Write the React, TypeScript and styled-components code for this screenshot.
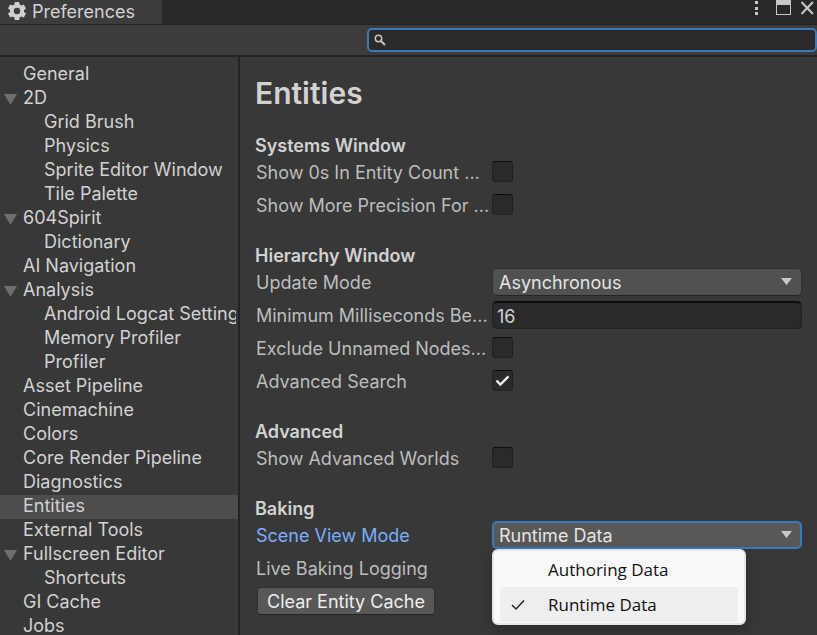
import React, { useState } from "react";
import styled, { createGlobalStyle } from "styled-components";

const GlobalStyle = createGlobalStyle`
  *, *::before, *::after { box-sizing: border-box; }
  body {
    margin: 0;
    background: #383838;
    color: #c4c4c4;
    font-family: Inter, "Liberation Sans", sans-serif;
    font-size: 18px;
  }
  button, input, select { font: inherit; color: inherit; }
`;

const Window = styled.div`
  display: flex;
  flex-direction: column;
  height: 100vh;
  overflow: hidden;
`;

const TitleBar = styled.header`
  display: flex;
  justify-content: space-between;
  height: 25px;
  background: #282828;
  border-bottom: 1px solid #232323;
`;

const Tab = styled.div`
  display: flex;
  align-items: flex-start;
  gap: 6px;
  width: 162px;
  padding-left: 8px;
  background: #3c3c3c;
  color: #d2d2d2;
  line-height: 24px;
`;

const WindowButtons = styled.div`
  display: flex;
  align-items: flex-start;
`;

const IconButton = styled.button`
  display: flex;
  padding: 0;
  border: 0;
  background: none;
`;

const Toolbar = styled.div`
  display: flex;
  justify-content: flex-end;
  align-items: center;
  height: 32px;
  background: #3c3c3c;
  border-bottom: 2px solid #232323;
`;

const SearchBox = styled.label`
  display: flex;
  align-items: center;
  gap: 6px;
  width: 450px;
  max-width: 100%;
  height: 24px;
  padding: 0 6px 0 5px;
  background: #2a2a2a;
  border: 2px solid #3a79bb;
  border-radius: 5px;
`;

const SearchInput = styled.input`
  flex: 1;
  min-width: 0;
  height: 18px;
  padding: 0;
  border: 0;
  outline: 0;
  background: none;
  font-size: 16px;
`;

const Body = styled.div`
  display: flex;
  flex: 1;
  min-height: 0;
`;

const Sidebar = styled.nav`
  flex: 0 0 240px;
  padding-top: 6px;
  overflow: hidden;
  border-right: 2px solid #232323;
`;

const NavList = styled.ul`
  margin: 0;
  padding: 0;
  list-style: none;
`;

const NavItem = styled.li<{ $depth: number; $selected?: boolean }>`
  display: flex;
  align-items: flex-start;
  height: 24px;
  padding-left: ${(p) => (p.$depth ? 44 : 4)}px;
  padding-right: 2px;
  background: ${(p) => (p.$selected ? "#4d4d4d" : "transparent")};
`;

const Foldout = styled.span`
  display: flex;
  flex: 0 0 19px;
  align-items: center;
  height: 24px;
`;

const NavLink = styled.a`
  flex: 1;
  min-width: 0;
  overflow: hidden;
  color: #d2d2d2;
  line-height: 22px;
  text-decoration: none;
  white-space: nowrap;
`;

const Content = styled.main`
  display: flex;
  flex: 1;
  flex-direction: column;
  gap: 24px;
  min-width: 0;
  padding: 16px 15px 0;
`;

const Title = styled.h1`
  margin: 0 0 -4px;
  color: #d2d2d2;
  font-size: 30px;
  font-weight: 600;
  line-height: 40px;
`;

const Section = styled.section`
  display: flex;
  flex-direction: column;
`;

const SectionTitle = styled.h2`
  margin: 0;
  color: #d2d2d2;
  font-size: 18px;
  font-weight: 600;
  line-height: 25px;
`;

const Rows = styled.div`
  display: flex;
  flex-direction: column;
  gap: 5px;
`;

const Row = styled.div`
  display: grid;
  grid-template-columns: 237px minmax(0, 1fr);
  align-items: center;
  height: 28px;
`;

const Label = styled.label<{ $active?: boolean }>`
  padding-left: 1px;
  overflow: hidden;
  color: ${(p) => (p.$active ? "#7baefa" : "#bdbdbd")};
  white-space: nowrap;
`;

const CheckWrap = styled.span`
  position: relative;
  display: flex;
  width: 21px;
  height: 21px;
  margin-bottom: 1px;
`;

const CheckInput = styled.input`
  width: 21px;
  height: 21px;
  margin: 0;
  appearance: none;
  background: #2a2a2a;
  border: 1px solid #212121;
  border-top-color: #0d0d0d;
  border-radius: 3px;
  & + svg { display: none; }
  &:checked + svg { display: block; }
`;

const CheckMark = styled.svg`
  position: absolute;
  inset: 0;
  pointer-events: none;
`;

const NumberInput = styled.input`
  width: 100%;
  height: 28px;
  padding: 1px 4px 0;
  background: #2a2a2a;
  border: 1px solid #212121;
  border-top: 2px solid #0d0d0d;
  border-radius: 5px;
  color: #d2d2d2;
`;

const SelectWrap = styled.span`
  position: relative;
  display: block;
`;

const SelectInput = styled.select<{ $open?: boolean }>`
  display: block;
  width: 100%;
  height: 28px;
  padding: 0 30px 0 ${(p) => (p.$open ? 5 : 6)}px;
  appearance: none;
  outline: 0;
  background: ${(p) => (p.$open ? "#585858" : "#515151")};
  border: ${(p) => (p.$open ? "2px solid #3a79bb" : "1px solid #303030")};
  border-bottom-color: ${(p) => (p.$open ? "#3a79bb" : "#242424")};
  border-radius: 5px;
  color: #e4e4e4;
`;

const Arrow = styled.svg`
  position: absolute;
  top: 10px;
  right: 10px;
  pointer-events: none;
`;

const Menu = styled.div`
  position: absolute;
  top: 28px;
  left: 0;
  z-index: 1;
  width: 254px;
  padding: 1px 6px 1px;
  background: #f9f9f9;
  border: 2px solid #e6e6e6;
  border-radius: 6px;
  box-shadow: 0 5px 14px rgba(0, 0, 0, 0.25);
`;

const MenuItem = styled.button<{ $selected?: boolean }>`
  display: grid;
  grid-template-columns: 48px 1fr;
  align-items: center;
  width: 100%;
  height: 35px;
  padding: 0;
  border: 0;
  border-radius: 4px;
  background: ${(p) => (p.$selected ? "#efefef" : "transparent")};
  color: #111;
  font-family: "Open Sans", "Noto Sans", sans-serif;
  font-size: 17px;
  text-align: left;
`;

const MenuCheck = styled.svg`
  grid-column: 1;
  margin-left: 11px;
`;

const MenuText = styled.span`
  grid-column: 2;
`;

const ActionButton = styled.button`
  align-self: flex-start;
  height: 28px;
  margin-left: 2px;
  padding: 0 9px;
  background: #585858;
  border: 1px solid #303030;
  border-bottom-color: #242424;
  border-radius: 4px;
  color: #eeeeee;
`;

type NavEntry = { name: string; depth?: number; open?: boolean };

const navigation: NavEntry[] = [
  { name: "General" },
  { name: "2D", open: true },
  { name: "Grid Brush", depth: 1 },
  { name: "Physics", depth: 1 },
  { name: "Sprite Editor Window", depth: 1 },
  { name: "Tile Palette", depth: 1 },
  { name: "604Spirit", open: true },
  { name: "Dictionary", depth: 1 },
  { name: "AI Navigation" },
  { name: "Analysis", open: true },
  { name: "Android Logcat Settings", depth: 1 },
  { name: "Memory Profiler", depth: 1 },
  { name: "Profiler", depth: 1 },
  { name: "Asset Pipeline" },
  { name: "Cinemachine" },
  { name: "Colors" },
  { name: "Core Render Pipeline" },
  { name: "Diagnostics" },
  { name: "Entities" },
  { name: "External Tools" },
  { name: "Fullscreen Editor", open: true },
  { name: "Shortcuts", depth: 1 },
  { name: "GI Cache" },
  { name: "Jobs" },
];

function GearIcon() {
  return (
    <svg width="18" height="22" viewBox="0 0 18 22" aria-hidden="true">
      <g transform="translate(9 11)" fill="#d0d0d0">
        <path
          fillRule="evenodd"
          d="M-2.200 -9h4.400l.4 2.600 1.800 1 2.400-1 2.200 3.800-2 1.600v2l2 1.600-2.200 3.800-2.400-1-1.800 1-.4 2.600h-4.400l-.4-2.600-1.800-1-2.400 1-2.200-3.800 2-1.600v-2l-2-1.600 2.200-3.800 2.400 1 1.800-1zM0-3.200a3.200 3.200 0 1 0 0 6.400 3.200 3.200 0 0 0 0-6.400z"
        />
      </g>
    </svg>
  );
}

function CheckField({ id, label, checked }: { id: string; label: string; checked?: boolean }) {
  return (
    <Row>
      <Label htmlFor={id}>{label}</Label>
      <CheckWrap>
        <CheckInput id={id} type="checkbox" defaultChecked={checked} />
        <CheckMark width="21" height="21" viewBox="0 0 21 21" aria-hidden="true">
          <path d="M4.500 10.500l3.800 4L16.500 6.300" fill="none" stroke="#eeeeee" strokeWidth="2.400" />
        </CheckMark>
      </CheckWrap>
    </Row>
  );
}

function DropArrow() {
  return (
    <Arrow width="11" height="7" viewBox="0 0 11 7" aria-hidden="true">
      <path d="M0 0h11L5.500 7z" fill="#c8c8c8" />
    </Arrow>
  );
}

export default function App() {
  const [sceneMode, setSceneMode] = useState("Runtime Data");
  const modes = ["Authoring Data", "Runtime Data"];

  return (
    <>
      <GlobalStyle />
      <Window>
        <TitleBar>
          <Tab>
            <GearIcon />
            Preferences
          </Tab>
          <WindowButtons>
            <IconButton aria-label="Menu">
              <svg width="22" height="18" viewBox="0 0 22 18" fill="#c8c8c8">
                <path d="M1 1h3v3H1zM1 7h3v3H1zM1 12h3v3H1z" />
              </svg>
            </IconButton>
            <IconButton aria-label="Maximize">
              <svg width="24" height="18" viewBox="0 0 24 18">
                <path d="M0 0h15v15H0zM1 5v9h13V5z" fill="#c8c8c8" fillRule="evenodd" />
              </svg>
            </IconButton>
            <IconButton aria-label="Close">
              <svg width="17" height="18" viewBox="0 0 17 18">
                <path d="M1.500 2l11.500 12M13 2L1.500 14" stroke="#c8c8c8" strokeWidth="2" />
              </svg>
            </IconButton>
          </WindowButtons>
        </TitleBar>
        <Toolbar>
          <SearchBox>
            <svg width="12" height="12" viewBox="0 0 12 12" fill="none" stroke="#c4c4c4" aria-hidden="true">
              <circle cx="4.500" cy="4.500" r="3.200" strokeWidth="1.500" />
              <path d="M7 7l4 4" strokeWidth="2" />
            </svg>
            <SearchInput type="text" aria-label="Search preferences" />
          </SearchBox>
        </Toolbar>
        <Body>
          <Sidebar>
            <NavList>
              {navigation.map((item) => (
                <NavItem key={item.name} $depth={item.depth ?? 0} $selected={item.name === "Entities"}>
                  {!item.depth && (
                    <Foldout>
                      {item.open && (
                        <svg width="13" height="12" viewBox="0 0 13 12" aria-hidden="true">
                          <path d="M0 1h13L6.500 12z" fill="#6e6e6e" />
                        </svg>
                      )}
                    </Foldout>
                  )}
                  <NavLink href="#">{item.name}</NavLink>
                </NavItem>
              ))}
            </NavList>
          </Sidebar>
          <Content>
            <Title>Entities</Title>
            <Section>
              <SectionTitle>Systems Window</SectionTitle>
              <Rows>
                <CheckField id="show-zeros" label="Show 0s In Entity Count ..." />
                <CheckField id="precision" label="Show More Precision For ..." />
              </Rows>
            </Section>
            <Section>
              <SectionTitle>Hierarchy Window</SectionTitle>
              <Rows>
                <Row>
                  <Label htmlFor="update-mode">Update Mode</Label>
                  <SelectWrap>
                    <SelectInput id="update-mode" defaultValue="Asynchronous">
                      <option>Asynchronous</option>
                      <option>Synchronous</option>
                    </SelectInput>
                    <DropArrow />
                  </SelectWrap>
                </Row>
                <Row>
                  <Label htmlFor="minimum-ms">Minimum Milliseconds Be...</Label>
                  <NumberInput id="minimum-ms" type="text" inputMode="numeric" defaultValue="16" />
                </Row>
                <CheckField id="unnamed" label="Exclude Unnamed Nodes..." />
                <CheckField id="advanced-search" label="Advanced Search" checked />
              </Rows>
            </Section>
            <Section>
              <SectionTitle>Advanced</SectionTitle>
              <Rows>
                <CheckField id="worlds" label="Show Advanced Worlds" />
              </Rows>
            </Section>
            <Section>
              <SectionTitle>Baking</SectionTitle>
              <Rows>
                <Row>
                  <Label htmlFor="scene-mode" $active>Scene View Mode</Label>
                  <SelectWrap>
                    <SelectInput
                      id="scene-mode"
                      $open
                      value={sceneMode}
                      onChange={(e) => setSceneMode(e.target.value)}
                    >
                      {modes.map((mode) => (
                        <option key={mode}>{mode}</option>
                      ))}
                    </SelectInput>
                    <DropArrow />
                    <Menu role="listbox" aria-label="Scene View Mode">
                      {modes.map((mode) => (
                        <MenuItem
                          key={mode}
                          role="option"
                          aria-selected={mode === sceneMode}
                          $selected={mode === sceneMode}
                          onClick={() => setSceneMode(mode)}
                        >
                          {mode === sceneMode && (
                            <MenuCheck width="14" height="12" viewBox="0 0 14 12" aria-hidden="true">
                              <path d="M1 6l4 4 8-8.500" fill="none" stroke="#222" strokeWidth="1.500" />
                            </MenuCheck>
                          )}
                          <MenuText>{mode}</MenuText>
                        </MenuItem>
                      ))}
                    </Menu>
                  </SelectWrap>
                </Row>
                <Row>
                  <Label as="span">Live Baking Logging</Label>
                </Row>
                <ActionButton>Clear Entity Cache</ActionButton>
              </Rows>
            </Section>
          </Content>
        </Body>
      </Window>
    </>
  );
}
